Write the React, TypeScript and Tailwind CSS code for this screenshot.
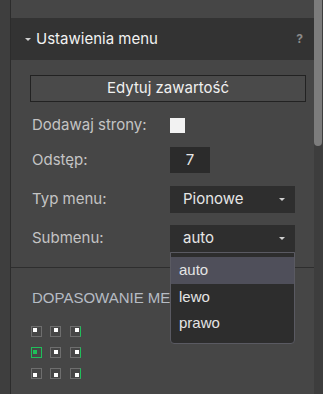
import React from 'react';

const cells = [
  { pos: 'items-start justify-start', right: false, sel: false },
  { pos: 'items-start justify-center', right: false, sel: false },
  { pos: 'items-start justify-end', right: true, sel: false },
  { pos: 'items-center justify-start', right: false, sel: true },
  { pos: 'items-center justify-center', right: false, sel: false },
  { pos: 'items-center justify-end', right: true, sel: false },
  { pos: 'items-end justify-start', right: false, sel: false },
  { pos: 'items-end justify-center', right: false, sel: false },
  { pos: 'items-end justify-end', right: true, sel: false },
];

function Caret() {
  return <span className="h-0 w-0 border-x-[3px] border-t-[3px] border-x-transparent border-t-[#d0d0d0]" />;
}

function Select({ value, open }: { value: string; open?: boolean }) {
  return (
    <div className="relative w-[125px]">
      <div className="flex h-[27px] items-center justify-between bg-[#2e2e2e] pl-[13px] pr-[10px] text-[15px] text-[#e6e6e6]">
        <span>{value}</span>
        <Caret />
      </div>
      {open && (
        <div className="absolute left-0 top-full z-10 w-full rounded-b-[4px] border border-[#5a5a62] bg-[#2d2d2d] pb-[6px] pt-[4px] font-['Liberation_Sans',sans-serif] text-[15px] text-[#e4e4e4]">
          <div className="flex h-[27px] items-center bg-[#4f4f5a] pl-[8px]">auto</div>
          <div className="flex h-[26px] items-center pl-[8px]">lewo</div>
          <div className="flex h-[27px] items-center pl-[8px]">prawo</div>
        </div>
      )}
    </div>
  );
}

export default function App() {
  return (
    <div className="flex h-[394px] w-[323px] overflow-hidden bg-[#464646] font-['Inter',sans-serif]">
      <div className="w-[11px] shrink-0 border-r border-[#2c2c2c] bg-[#3e3e3e]" />

      <div className="flex flex-1 flex-col">
        <div className="h-[18px] shrink-0" />

        {/* panel header */}
        <div className="flex h-[42px] shrink-0 items-center bg-[#333333] pl-[14px] pr-[11px]">
          <span className="h-0 w-0 border-x-[3px] border-t-[3px] border-x-transparent border-t-[#cfcfcf]" />
          <span className="ml-[5px] text-[15px] text-[#f2f2f2]">Ustawienia menu</span>
          <span className="ml-auto text-[12px] font-bold text-[#8a8a8a]">?</span>
        </div>

        <div className="flex flex-col pl-[19px] pr-[8px] pt-[15px]">
          <button className="h-[27px] w-full border border-[#222222] bg-[#4a4a4a] text-[15px] text-[#f0f0f0]">
            Edytuj zawartość
          </button>

          <div className="mt-[16px] flex h-[15px] items-center pl-[2px] text-[15px] text-[#c4c4c4]">
            <span className="w-[138px]">Dodawaj strony:</span>
            <span className="h-[15px] w-[15px] bg-[#f2f2f2]" />
          </div>

          <div className="mt-[14px] flex items-center pl-[2px] text-[15px] text-[#c4c4c4]">
            <span className="w-[138px]">Odstęp:</span>
            <span className="flex h-[26px] w-[40px] items-center justify-center bg-[#2b2b2b] text-[#e6e6e6]">7</span>
          </div>

          <div className="mt-[13px] flex items-center pl-[2px] text-[15px] text-[#c4c4c4]">
            <span className="w-[138px]">Typ menu:</span>
            <Select value="Pionowe" />
          </div>

          <div className="mt-[12px] flex items-center pl-[2px] text-[15px] text-[#c4c4c4]">
            <span className="w-[138px]">Submenu:</span>
            <Select value="auto" open />
          </div>
        </div>

        <div className="mt-[15px] border-t border-[#2e2e2e]" />

        <div className="pl-[21px] pt-[19px] font-['Liberation_Sans',sans-serif] text-[15px] text-[#b6bcc4]">
          DOPASOWANIE MENU
        </div>

        <div className="ml-[20px] mt-[16px] grid w-[50px] grid-cols-3 gap-x-[8px] gap-y-[10px]">
          {cells.map((c, i) => (
            <div
              key={i}
              className={`flex h-[11px] w-[11px] p-px ${c.pos} ${
                c.sel
                  ? 'border border-[#1fbf5a]'
                  : c.right
                  ? 'border border-[#6e6e6e] border-r-[#1fbf5a]'
                  : 'border border-[#6e6e6e]'
              }`}
            >
              <span className={`h-[4px] w-[4px] ${c.sel ? 'bg-[#1fbf5a]' : 'bg-white'}`} />
            </div>
          ))}
        </div>
      </div>

      <div className="flex w-[9px] shrink-0 flex-col bg-[#3d3d3d]">
        <div className="h-[146px] w-[8px] rounded-b-[4px] bg-[#7c7c7c]" />
      </div>
    </div>
  );
}
